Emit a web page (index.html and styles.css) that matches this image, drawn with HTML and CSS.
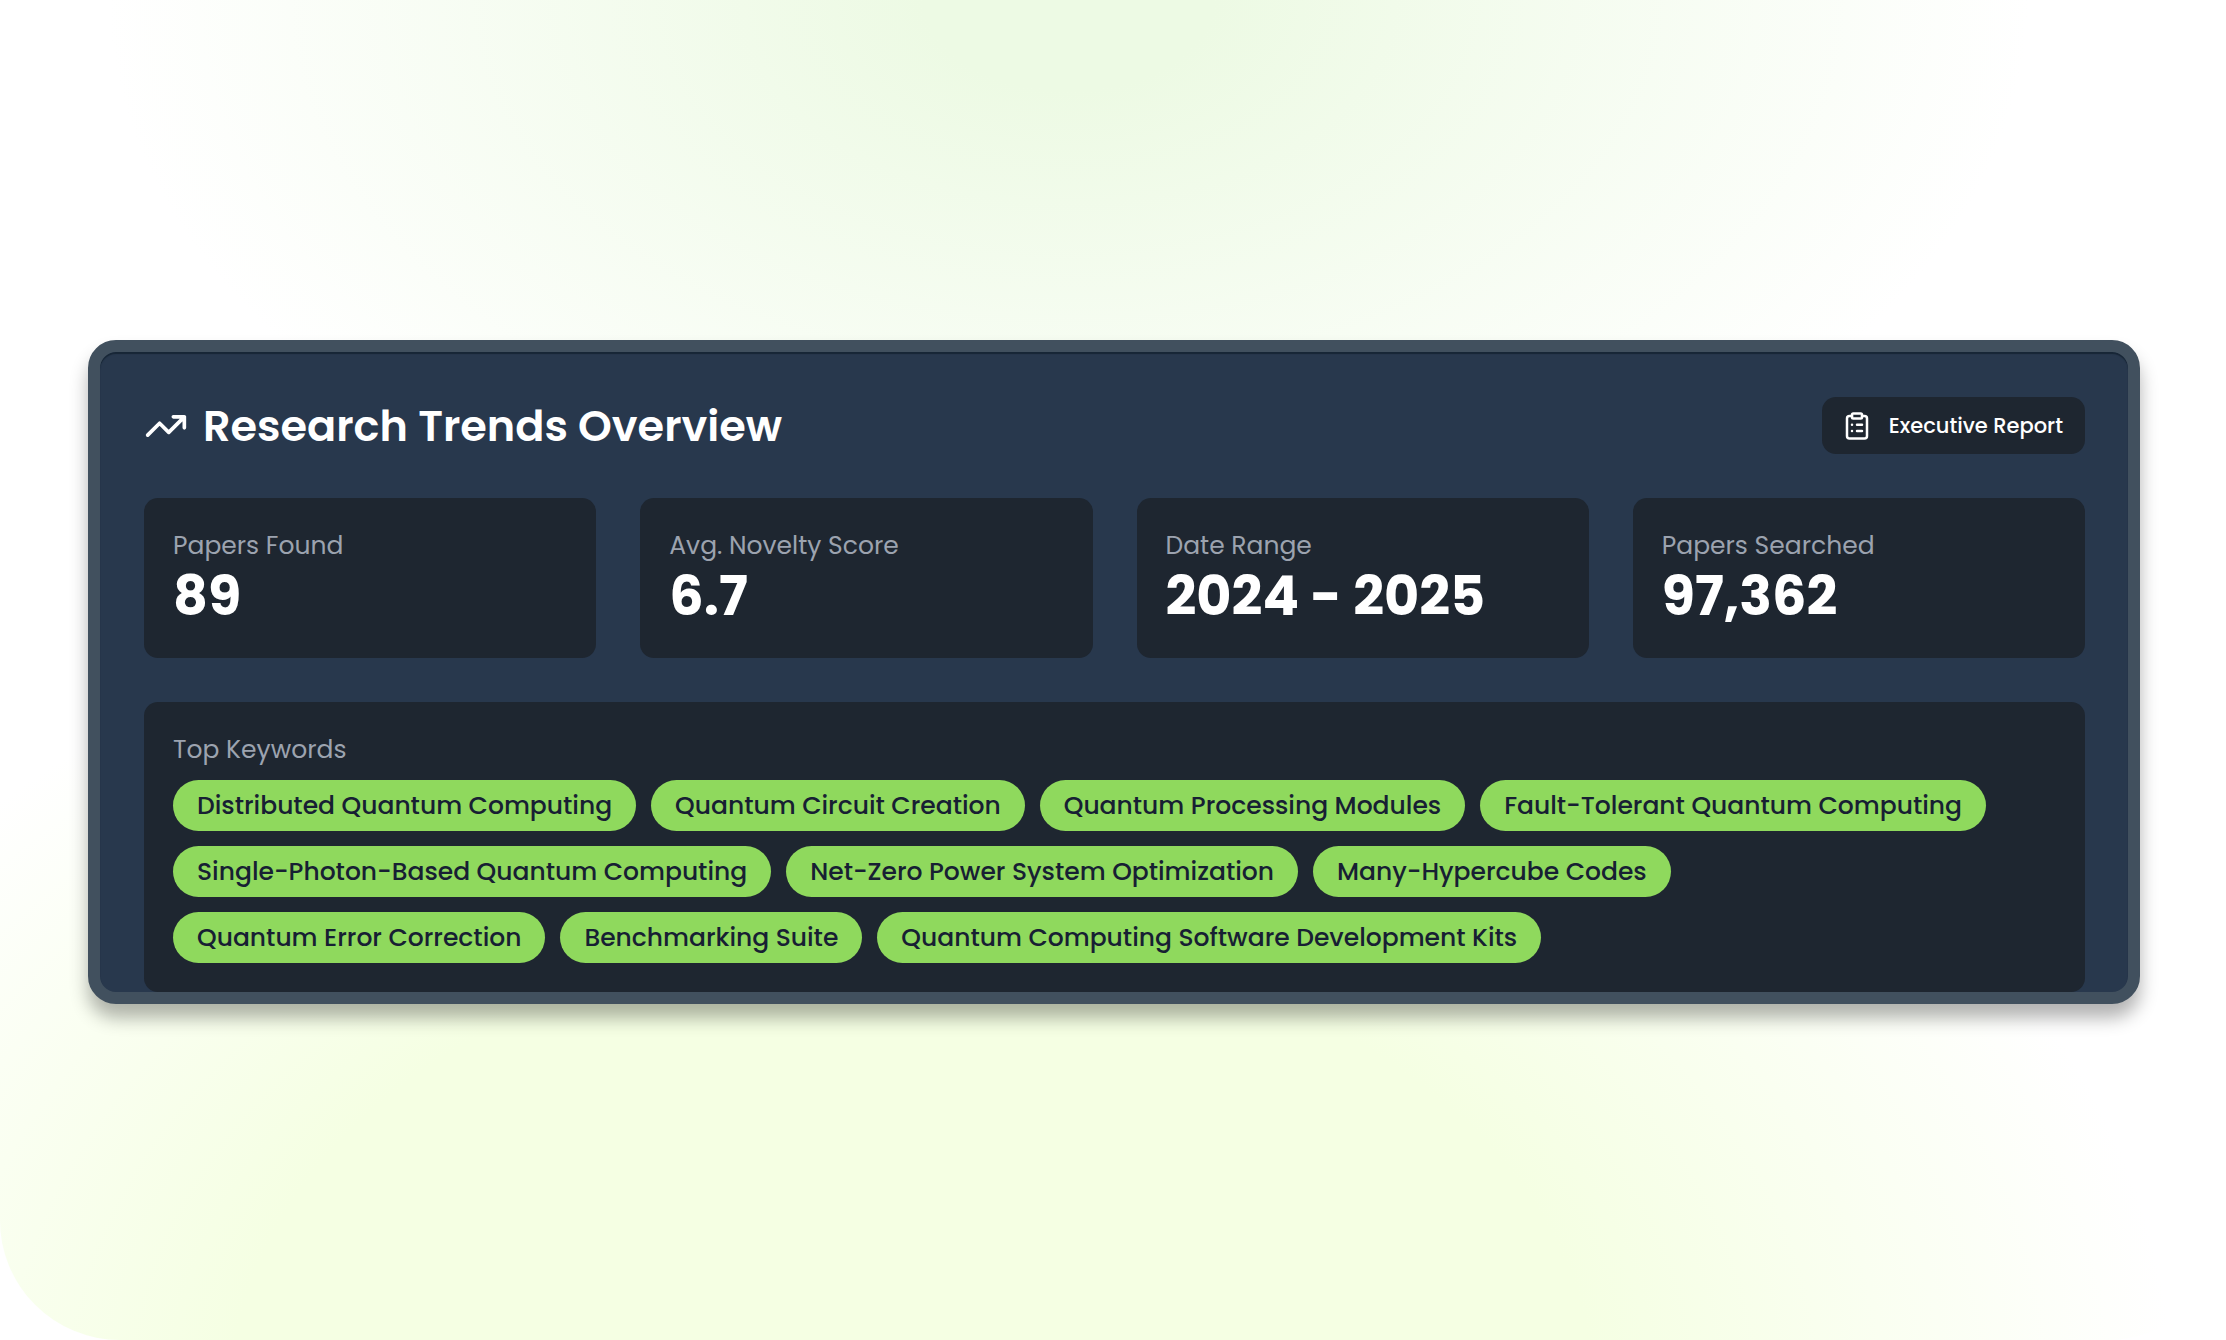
FILE: index.html
```html
<!DOCTYPE html>
<html lang="en">
  <head>
    <meta charset="utf-8">
    <meta name="viewport" content="width=device-width, initial-scale=1">
    <title>Research Trends Overview</title>
    <link rel="stylesheet" href="styles.css">
  </head>
  <body>
    <main class="stage">
      <section class="panel">
        <header class="panel-header">
          <h1 class="title">
            <svg class="title-icon" viewBox="0 0 24 24" aria-hidden="true">
              <path d="M22 7l-8.5 8.5-5-5L2 17M16 7h6v6"/>
            </svg>
            Research Trends Overview
          </h1>
          <button type="button" class="report-button">
            <svg class="report-icon" viewBox="0 0 24 24" aria-hidden="true">
              <rect x="8" y="2" width="8" height="4" rx="1"/>
              <path d="M16 4h2a2 2 0 0 1 2 2v14a2 2 0 0 1-2 2H6a2 2 0 0 1-2-2V6a2 2 0 0 1 2-2h2M12 11h4M12 16h4M8 11h.01M8 16h.01"/>
            </svg>
            Executive Report
          </button>
        </header>

        <dl class="stats">
          <div class="card">
            <dt class="label">Papers Found</dt>
            <dd class="value">89</dd>
          </div>
          <div class="card">
            <dt class="label">Avg. Novelty Score</dt>
            <dd class="value">6.7</dd>
          </div>
          <div class="card">
            <dt class="label">Date Range</dt>
            <dd class="value">2024 - 2025</dd>
          </div>
          <div class="card">
            <dt class="label">Papers Searched</dt>
            <dd class="value">97,362</dd>
          </div>
        </dl>

        <div class="card">
          <h2 class="label">Top Keywords</h2>
          <ul class="keywords">
            <li>Distributed Quantum Computing</li>
            <li>Quantum Circuit Creation</li>
            <li>Quantum Processing Modules</li>
            <li>Fault-Tolerant Quantum Computing</li>
            <li>Single-Photon-Based Quantum Computing</li>
            <li>Net-Zero Power System Optimization</li>
            <li>Many-Hypercube Codes</li>
            <li>Quantum Error Correction</li>
            <li>Benchmarking Suite</li>
            <li>Quantum Computing Software Development Kits</li>
          </ul>
        </div>
      </section>
    </main>
  </body>
</html>
```

FILE: styles.css
```css
* {
  box-sizing: border-box;
}
body {
  margin: 0;
  background: #fff;
  color: #fff;
  font-family: Poppins, Inter, "Open Sans", sans-serif;
}
.stage {
  display: flex;
  align-items: center;
  min-height: 100vh;
  padding: 44px 86px 40px 88px;
  border-radius: 0 0 120px 120px;
  background:
    radial-gradient(ellipse 960px 600px at 48% 0, #edfae4 15%, rgba(237, 250, 228, 0)),
    radial-gradient(ellipse 1260px 860px at 41% 104%, #f5ffe3 54%, rgba(245, 255, 227, 0)),
    #fff;
}
.panel {
  flex: 1;
  padding: 45px 43px 0 44px;
  border: 12px solid #41505e;
  border-radius: 28px;
  background: #28384d;
  box-shadow: 0 14px 18px rgba(0, 0, 0, 0.3), inset 0 2px 1px #172636;
}
.panel-header {
  display: flex;
  justify-content: space-between;
  align-items: center;
  margin-bottom: 44px;
}
.title {
  display: flex;
  align-items: center;
  gap: 15px;
  margin: 0;
  font-size: 43px;
  font-weight: 600;
  line-height: 56px;
}
.title-icon,
.report-icon {
  fill: none;
  stroke: currentColor;
  stroke-width: 2;
  stroke-linecap: round;
  stroke-linejoin: round;
}
.title-icon {
  width: 44px;
  height: 44px;
}
.report-icon {
  width: 30px;
  height: 30px;
}
.report-button {
  display: flex;
  align-items: center;
  gap: 17px;
  height: 57px;
  padding: 0 22px 0 20px;
  border: 0;
  border-radius: 14px;
  background: #1e2630;
  color: #fff;
  font: inherit;
  font-size: 21px;
  font-weight: 500;
  cursor: pointer;
}
.stats {
  display: grid;
  grid-template-columns: repeat(4, 1fr);
  gap: 44px;
  margin: 0 0 44px;
}
.card {
  padding: 29px;
  border-radius: 14px;
  background: #1e2630;
}
.label {
  margin: 0;
  color: #9ca3af;
  font-size: 25px;
  font-weight: 400;
  line-height: 38px;
}
.value {
  margin: 0 0 2px;
  font-size: 54px;
  font-weight: 700;
  line-height: 62px;
}
.keywords {
  display: flex;
  flex-wrap: wrap;
  gap: 15px;
  margin: 11px 0 0;
  padding: 0;
  list-style: none;
}
.keywords li {
  padding: 0 24px;
  border-radius: 26px;
  background: #8fd95d;
  color: #172033;
  font-size: 25px;
  font-weight: 500;
  line-height: 51px;
}
```
